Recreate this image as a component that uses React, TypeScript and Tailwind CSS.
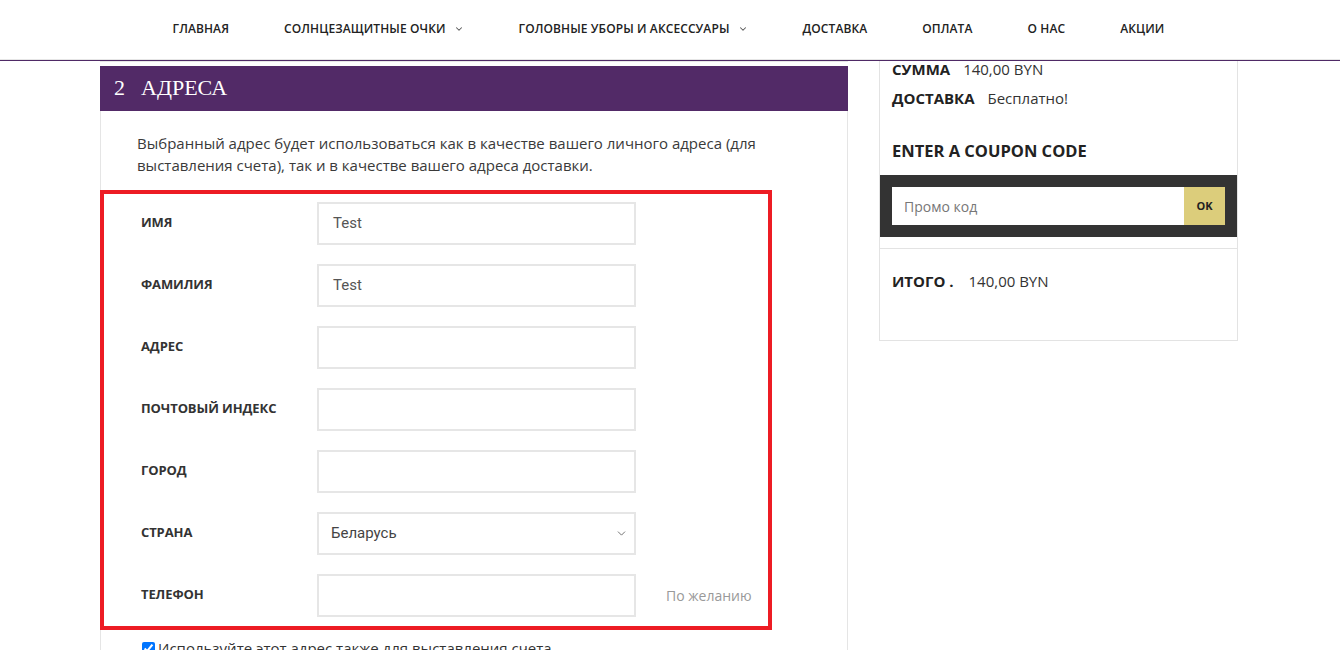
import { ChevronDown } from "lucide-react";

const navItems: { label: string; dropdown?: boolean }[] = [
  { label: "Главная" },
  { label: "Солнцезащитные очки", dropdown: true },
  { label: "Головные уборы и аксессуары", dropdown: true },
  { label: "Доставка" },
  { label: "Оплата" },
  { label: "О нас" },
  { label: "Акции" },
];

const fields: { label: string; value?: string; select?: boolean; optional?: boolean }[] = [
  { label: "Имя", value: "Test" },
  { label: "Фамилия", value: "Test" },
  { label: "Адрес" },
  { label: "Почтовый индекс" },
  { label: "Город" },
  { label: "Страна", value: "Беларусь", select: true },
  { label: "Телефон", optional: true },
];

function Header() {
  return (
    <header className="h-[61px] border-b border-[#4f2a66] bg-white shadow-[0_-1px_0_#e6e6e6_inset]">
      <nav className="flex h-[58px] items-center justify-center gap-[55px] pr-[3px]">
        {navItems.map((item) => (
          <a
            key={item.label}
            href="#"
            className="flex items-center gap-[8px] text-[12px] font-semibold uppercase tracking-[0.1px] text-[#222]"
          >
            {item.label}
            {item.dropdown && <ChevronDown size={10} strokeWidth={2.5} className="text-[#555]" />}
          </a>
        ))}
      </nav>
    </header>
  );
}

function AddressForm() {
  return (
    <div className="w-[748px]">
      <div className="border-t border-[#e8e8e8] pt-[4px]">
        <h2 className="flex h-[45px] items-center bg-[#522a67] pb-[3px] pl-[14px] font-['Liberation_Serif',serif] text-[22px] uppercase text-white">
          <span className="mr-[16px]">2</span>Адреса
        </h2>
      </div>
      <div className="border-x border-[#e5e5e5] pb-[20px]">
        <p className="pb-[14px] pl-[36px] pr-[20px] pt-[21px] text-[15px] leading-[22px] text-[#3a3a3a]">
          Выбранный адрес будет использоваться как в качестве вашего личного адреса (для
          <br />
          выставления счета), так и в качестве вашего адреса доставки.
        </p>
        <div className="-ml-px w-[672px] border-4 border-[#ed1c24] pb-[9px] pl-[37px] pt-[8px]">
          <div className="flex flex-col gap-[19px]">
            {fields.map((f) => (
              <div key={f.label} className="flex items-center">
                <label className="w-[176px] pb-[2px] text-[13px] font-bold uppercase tracking-[-0.1px] text-[#333]">
                  {f.label}
                </label>
                {f.select ? (
                  <div className="flex h-[43px] w-[319px] items-center justify-between border-2 border-[#e6e6e6] pl-[12px] pr-[6px] font-['Roboto',sans-serif] text-[15px] text-[#444]">
                    <span>{f.value}</span>
                    <ChevronDown size={13} strokeWidth={1.5} className="text-[#555]" />
                  </div>
                ) : (
                  <div className="flex h-[43px] w-[319px] items-center border-2 border-[#e6e6e6] pl-[14px] font-['Roboto',sans-serif] text-[15px] text-[#555]">
                    {f.value}
                  </div>
                )}
                {f.optional && (
                  <span className="ml-[30px] text-[14px] text-[#999]">По желанию</span>
                )}
              </div>
            ))}
          </div>
        </div>
        <label className="mt-[7px] flex items-center gap-[3px] pl-[41px] text-[15px] leading-[22px] text-[#333]">
          <input type="checkbox" defaultChecked className="h-[13px] w-[13px] accent-[#0075ff]" />
          Используйте этот адрес также для выставления счета
        </label>
      </div>
    </div>
  );
}

function Summary() {
  return (
    <aside className="w-[359px] self-start border-x border-b border-[#e3e3e3]">
      <div className="px-[12px]">
        <div className="-mt-[2px] flex h-[20px] items-center gap-[13px] text-[15px]">
          <span className="font-bold uppercase text-[#222]">Сумма</span>
          <span className="text-[#333]">140,00 BYN</span>
        </div>
        <div className="mt-[9px] flex h-[20px] items-center gap-[13px] text-[15px]">
          <span className="font-bold uppercase text-[#222]">Доставка</span>
          <span className="text-[#333]">Бесплатно!</span>
        </div>
        <h3 className="mt-[32px] text-[16.5px] font-bold uppercase leading-[22px] text-[#222]">
          Enter a coupon code
        </h3>
      </div>
      <div className="mt-[13px] flex h-[62px] items-center bg-[#333] px-[12px]">
        <div className="flex h-[38px] flex-1 items-center bg-white pl-[12px] text-[14px] text-[#777]">
          Промо код
        </div>
        <button className="flex h-[38px] w-[41px] items-center justify-center bg-[#dccd7b] text-[11px] font-bold text-[#222]">
          OK
        </button>
      </div>
      <div className="mt-[11px] h-[92px] border-t border-[#e3e3e3] px-[12px] pt-[22px]">
        <div className="flex h-[20px] items-center gap-[15px] text-[15px]">
          <span className="font-bold uppercase text-[#222]">Итого .</span>
          <span className="text-[#333]">140,00 BYN</span>
        </div>
      </div>
    </aside>
  );
}

export default function App() {
  return (
    <div className="h-[650px] overflow-hidden bg-white font-['Open_Sans',sans-serif]">
      <Header />
      <main className="mx-auto flex w-[1140px] gap-[31px]">
        <AddressForm />
        <Summary />
      </main>
    </div>
  );
}
